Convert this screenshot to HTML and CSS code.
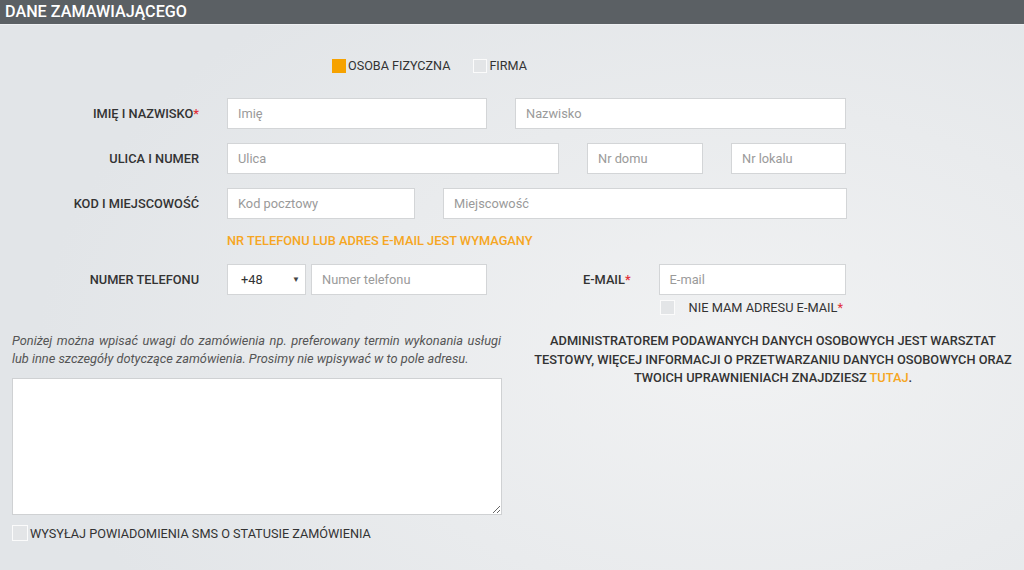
FILE: index.html
```html
<!DOCTYPE html>
<html lang="pl">
<head>
<meta charset="utf-8">
<title>Dane zamawiającego</title>
<link rel="stylesheet" href="styles.css">
</head>
<body>
<div class="page">
  <div class="header">DANE ZAMAWIAJĄCEGO</div>
  <div class="form">
    <div class="types">
      <label class="type"><span class="box box-on"></span>OSOBA FIZYCZNA</label>
      <label class="type"><span class="box"></span>FIRMA</label>
    </div>

    <div class="row">
      <div class="label">IMIĘ I NAZWISKO<span class="req">*</span></div>
      <div class="field w260">Imię</div>
      <div class="field w331">Nazwisko</div>
    </div>
    <div class="row">
      <div class="label">ULICA I NUMER</div>
      <div class="field w332">Ulica</div>
      <div class="field w116">Nr domu</div>
      <div class="field w115">Nr lokalu</div>
    </div>
    <div class="row">
      <div class="label">KOD I MIEJSCOWOŚĆ</div>
      <div class="field w188">Kod pocztowy</div>
      <div class="field w404">Miejscowość</div>
    </div>

    <div class="notice">NR TELEFONU LUB ADRES E-MAIL JEST WYMAGANY</div>

    <div class="row row-phone">
      <div class="label">NUMER TELEFONU</div>
      <div class="phone">
        <div class="select">+48<span class="arrow">▼</span></div>
        <div class="field w176">Numer telefonu</div>
      </div>
      <div class="email-group">
        <div class="label label-email">E-MAIL<span class="req">*</span></div>
        <div class="email-col">
          <div class="field w187">E-mail</div>
          <label class="nomail"><span class="box"></span>NIE MAM ADRESU E-MAIL<span class="req">*</span></label>
        </div>
      </div>
    </div>

    <div class="bottom">
      <div class="notes">
        <p class="hint">Poniżej można wpisać uwagi do zamówienia np. preferowany termin wykonania usługi lub inne szczegóły dotyczące zamówienia. Prosimy nie wpisywać w to pole adresu.</p>
        <textarea class="textarea"></textarea>
        <label class="sms"><span class="box"></span>WYSYŁAJ POWIADOMIENIA SMS O STATUSIE ZAMÓWIENIA</label>
      </div>
      <div class="admin">ADMINISTRATOREM PODAWANYCH DANYCH OSOBOWYCH JEST WARSZTAT<br>TESTOWY, WIĘCEJ INFORMACJI O PRZETWARZANIU DANYCH OSOBOWYCH ORAZ<br>TWOICH UPRAWNIENIACH ZNAJDZIESZ <span class="link">TUTAJ</span>.</div>
    </div>
  </div>
</div>
</body>
</html>
```
FILE: styles.css
```css
html, body {
  margin: 0;
  padding: 0;
}
body {
  font-family: Roboto, "Liberation Sans", Arial, sans-serif;
  color: #333;
  width: 1024px;
  height: 570px;
  overflow: hidden;
  background: radial-gradient(ellipse 700px 450px at 72% 62%, #f1f2f3 0%, #e9ebed 55%, #e2e5e8 100%);
}
.header {
  height: 24px;
  line-height: 24px;
  background: #5b6064;
  color: #fff;
  font-size: 16.2px;
  font-weight: 500;
  padding-left: 5px;
  border-bottom: 1px solid #eef0f2;
}
.form {
  padding-top: 32px;
}
.types {
  display: flex;
  padding-left: 332px;
  gap: 23px;
  height: 17px;
  align-items: center;
}
.type {
  display: flex;
  align-items: center;
  font-size: 12.6px;
  color: #333;
}
.box {
  display: inline-block;
  width: 14px;
  height: 14px;
  background: #e3e5e7;
  border: 1px solid #fbfbfb;
  box-sizing: border-box;
  margin-right: 2px;
}
.box-on {
  background: #f6a200;
  border-color: #f6a200;
}
.row {
  display: flex;
  align-items: center;
  gap: 28px;
  margin-top: 14px;
}
.types + .row {
  margin-top: 24px;
}
.label {
  width: 199px;
  text-align: right;
  font-size: 12.8px;
  font-weight: 500;
  color: #333;
}
.req {
  color: #e0303a;
}
.field {
  height: 31px;
  box-sizing: border-box;
  background: #fff;
  border: 1px solid #d3d5d7;
  font-size: 12.8px;
  color: #9a9a9a;
  line-height: 29px;
  padding-left: 10px;
}
.w260 { width: 260px; }
.w331 { width: 331px; }
.w332 { width: 332px; }
.w116 { width: 116px; }
.w115 { width: 115px; }
.w188 { width: 188px; }
.w404 { width: 404px; }
.w176 { width: 176px; }
.w187 { width: 187px; }
.notice {
  padding-left: 227px;
  margin-top: 14px;
  font-size: 12.8px;
  font-weight: 500;
  color: #f6a623;
  line-height: 16px;
}
.row-phone {
  margin-top: 15px;
  align-items: flex-start;
}
.row-phone > .label {
  line-height: 31px;
}
.phone {
  display: flex;
  gap: 5px;
}
.select {
  width: 79px;
  height: 31px;
  box-sizing: border-box;
  background: #fff;
  border: 1px solid #d3d5d7;
  font-size: 12.8px;
  color: #333;
  line-height: 29px;
  padding-left: 13px;
  position: relative;
}
.arrow {
  position: absolute;
  right: 5px;
  top: 0;
  font-size: 8px;
  color: #444;
}
.email-group {
  display: flex;
  gap: 28px;
  margin-left: 68px;
}
.label-email {
  width: auto;
  line-height: 31px;
}
.email-col {
  display: flex;
  flex-direction: column;
}
.nomail {
  display: flex;
  align-items: center;
  font-size: 12.8px;
  color: #333;
  margin-top: 5px;
  padding-left: 1px;
}
.nomail .box {
  width: 15px;
  height: 15px;
  margin-right: 14px;
}
.bottom {
  display: flex;
  margin-top: 17px;
}
.notes {
  width: 490px;
  padding-left: 12px;
}
.hint {
  margin: 0;
  width: 489px;
  font-size: 12.8px;
  font-style: italic;
  color: #555;
  line-height: 18px;
  text-align: justify;
}
.textarea {
  display: block;
  width: 490px;
  height: 137px;
  box-sizing: border-box;
  margin-top: 10px;
  background: #fff;
  border: 1px solid #cfd1d3;
  resize: vertical;
  font-family: inherit;
}
.sms {
  display: flex;
  align-items: center;
  font-size: 12.7px;
  color: #333;
  margin-top: 10px;
}
.sms .box {
  width: 16px;
  height: 16px;
  margin-right: 2px;
}
.admin {
  width: 480px;
  margin-left: 31px;
  margin-top: 0;
  text-align: center;
  font-size: 12.8px;
  font-weight: 500;
  color: #333;
  line-height: 18.5px;
  white-space: nowrap;
}
.link {
  color: #f6a623;
}
```
